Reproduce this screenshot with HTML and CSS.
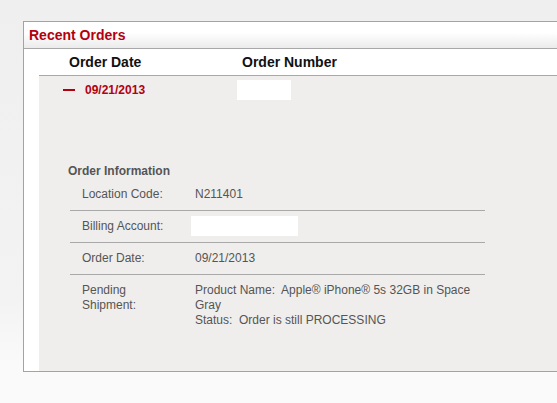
FILE: index.html
```html
<!DOCTYPE html>
<html>
<head>
<meta charset="utf-8">
<link rel="stylesheet" href="styles.css">
</head>
<body>
<div class="panel">
  <div class="panel-head">Recent Orders</div>
  <div class="cols">
    <div class="col-date">Order Date</div>
    <div class="col-num">Order Number</div>
  </div>
  <div class="body">
    <div class="order-row">
      <span class="dash"></span>
      <span class="date">09/21/2013</span>
      <span class="blank num-blank"></span>
    </div>
    <div class="info">
      <div class="info-title">Order Information</div>
      <div class="info-row">
        <div class="lbl">Location Code:</div>
        <div class="val">N211401</div>
      </div>
      <div class="info-row">
        <div class="lbl">Billing Account:</div>
        <div class="val"><span class="blank acct-blank"></span></div>
      </div>
      <div class="info-row">
        <div class="lbl">Order Date:</div>
        <div class="val">09/21/2013</div>
      </div>
      <div class="info-row last">
        <div class="lbl">Pending<br>Shipment:</div>
        <div class="val">Product Name:&nbsp; Apple® iPhone® 5s 32GB in Space Gray<br>Status:&nbsp; Order is still PROCESSING</div>
      </div>
    </div>
  </div>
</div>
</body>
</html>
```
FILE: styles.css
```css
html, body {
  margin: 0;
  padding: 0;
  height: 100%;
}
body {
  background: linear-gradient(#efefef 0, #f3f3f3 300px, #fafafa 365px, #fafafa 100%);
  font-family: "Liberation Sans", Arial, sans-serif;
  overflow: hidden;
  padding-top: 21px;
  box-sizing: border-box;
}
.panel {
  margin-left: 23px;
  border: 1px solid #a3a3a3;
  border-right: none;
  background: #fff;
}
.panel-head {
  height: 26px;
  line-height: 26px;
  padding-left: 5px;
  font-size: 14px;
  font-weight: bold;
  color: #b3000f;
  background: linear-gradient(#ffffff, #ffffff 40%, #ebebeb);
  border-bottom: 1px solid #a8a8a8;
}
.cols {
  margin-left: 15px;
  height: 26px;
  display: flex;
  align-items: center;
  font-size: 14px;
  font-weight: bold;
  color: #111;
  border-bottom: 1px solid #a8a8a8;
}
.col-date {
  padding-left: 30px;
  width: 173px;
}
.body {
  margin-left: 15px;
  background: #efeeec;
  height: 295px;
}
.order-row {
  height: 28px;
  display: flex;
  align-items: center;
  padding-left: 24px;
}
.dash {
  width: 12px;
  height: 2px;
  background: #b3000f;
  margin-right: 10px;
}
.date {
  font-size: 12px;
  font-weight: bold;
  color: #b3000f;
  width: 152px;
}
.blank {
  display: inline-block;
  background: #fff;
}
.num-blank {
  width: 54px;
  height: 20px;
}
.info {
  margin-left: 31px;
  width: 415px;
  padding-top: 60px;
  font-size: 12px;
  color: #555;
  line-height: 15px;
}
.info-title {
  font-weight: bold;
  margin-left: -2px;
}
.info-row {
  display: flex;
  padding: 8px 0 8px 12px;
  border-bottom: 1px solid #a9a9a9;
}
.info-row.last {
  border-bottom: none;
}
.lbl {
  width: 113px;
  flex: none;
}
.val {
  flex: 1;
}
.acct-blank {
  margin: -3px 0 -2px -4px;
  width: 107px;
  height: 20px;
  vertical-align: top;
}
```
